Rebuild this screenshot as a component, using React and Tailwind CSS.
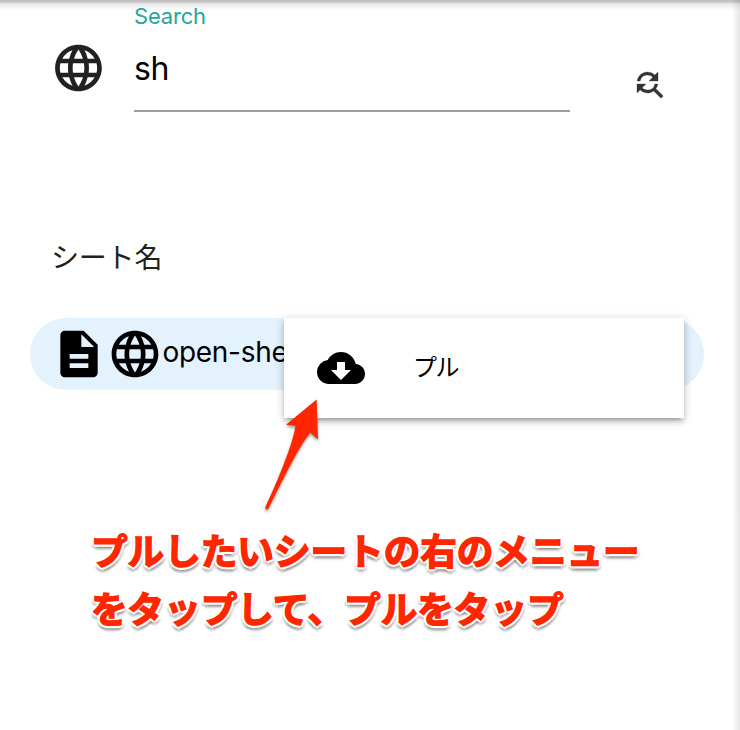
import { MdLanguage, MdDescription, MdCloudDownload } from "react-icons/md";

function FindReplaceIcon({ className }) {
  return (
    <svg className={className} viewBox="0 0 24 24" fill="currentColor" stroke="currentColor" strokeWidth="0.2">
      <path d="M11 6c1.38 0 2.63.56 3.54 1.46L12 10h6V4l-2.05 2.05A6.976 6.976 0 0 0 11 4c-3.53 0-6.43 2.61-6.92 6H6.1A5 5 0 0 1 11 6zm5.64 9.14A6.89 6.89 0 0 0 17.92 12H15.9a5 5 0 0 1-4.9 4c-1.38 0-2.63-.56-3.54-1.46L10 12H4v6l2.05-2.05A6.976 6.976 0 0 0 11 18c1.55 0 2.98-.51 4.14-1.36L20 21.49 21.49 20l-4.85-4.86z" />
    </svg>
  );
}

function SearchBar() {
  return (
    <div className="relative flex h-[112px] pl-[50px]">
      <MdLanguage className="mt-[40px] size-14 shrink-0 text-[#212121]" viewBox="-0.2 0 24 24" />
      <div className="ml-[28px] flex w-[436px] flex-col border-b-2 border-[#9e9e9e]">
        <label className="mt-[3px] text-[22px] leading-[26px] tracking-[-0.2px] text-[#26a69a]">Search</label>
        <span className="mt-[20px] text-[32px] leading-[40px] tracking-[-0.5px] text-black">sh</span>
      </div>
      <FindReplaceIcon className="mt-[66px] ml-[61px] size-9 shrink-0 text-[#333]" />
    </div>
  );
}

function SheetRow() {
  return (
    <div className="relative mt-[40px] mr-[36px] ml-[30px] flex h-[72px] items-center rounded-full bg-[#e3f2fd] pl-[20.5px] text-black">
      <MdDescription className="size-14 shrink-0" />
      <MdLanguage className="size-14 shrink-0" />
      <span className="-mt-[4px] text-[28px] leading-[36px] tracking-[-0.3px] whitespace-nowrap">open-sheet</span>
      <div className="absolute top-0 left-[254px] flex h-[100px] w-[400px] items-center bg-white pl-[33px] shadow-[0_4px_4px_0_rgba(0,0,0,0.14),0_6px_2px_-4px_rgba(0,0,0,0.12),0_2px_10px_0_rgba(0,0,0,0.2)]">
        <MdCloudDownload className="size-12 shrink-0" />
        <span className="ml-[48px] text-[24px] tracking-[-1.5px]">プル</span>
      </div>
    </div>
  );
}

function Arrow() {
  return (
    <svg
      className="absolute top-[390px] left-[250px] drop-shadow-[0_2px_1.5px_rgba(0,0,0,0.4)]"
      width="90"
      height="130"
      viewBox="250 390 90 130"
    >
      <path
        d="M316.6 399.5L286 424.7L295.5 425.8C294 440 280 476 265.2 507.5Q265.5 510.3 268.2 509C281 484 297 449 310.3 432.5L318 439.5Z"
        fill="#ff2600"
      />
    </svg>
  );
}

export default function App() {
  return (
    <div className="relative h-[730px] w-[740px] overflow-hidden bg-white font-['Inter','Noto_Sans_CJK_JP',sans-serif]">
      <div className="absolute inset-x-0 top-0 h-[12px] bg-[linear-gradient(to_bottom,#bdbdbd_0,#c8c8c8_2px,#e9e9e9_4px,#f8f8f8_8px,transparent)]" />
      <SearchBar />
      <h2 className="mt-[126px] ml-[51px] h-[40px] text-[28px] leading-[40px] font-normal tracking-[-0.2px] text-[#212121]">シート名</h2>
      <SheetRow />
      <p className="mt-[133px] ml-[91px] text-[36.6px] leading-[58px] font-bold whitespace-nowrap text-[#ff2600] [-webkit-text-stroke:1.5px_#ff2600] [text-shadow:3px_0_0_#fff,-3px_0_0_#fff,0_3px_0_#fff,0_-3px_0_#fff,2px_2px_0_#fff,-2px_2px_0_#fff,2px_-2px_0_#fff,-2px_-2px_0_#fff,3px_4px_2px_rgba(0,0,0,0.2),-3px_4px_2px_rgba(0,0,0,0.2),0_6px_2px_rgba(0,0,0,0.2)]">
        プルしたいシートの右のメニュー
        <br />
        をタップして、プルをタップ
      </p>
      <Arrow />
      <div className="pointer-events-none absolute inset-y-0 right-0 w-[8px] bg-linear-to-r from-transparent to-black/10" />
    </div>
  );
}
